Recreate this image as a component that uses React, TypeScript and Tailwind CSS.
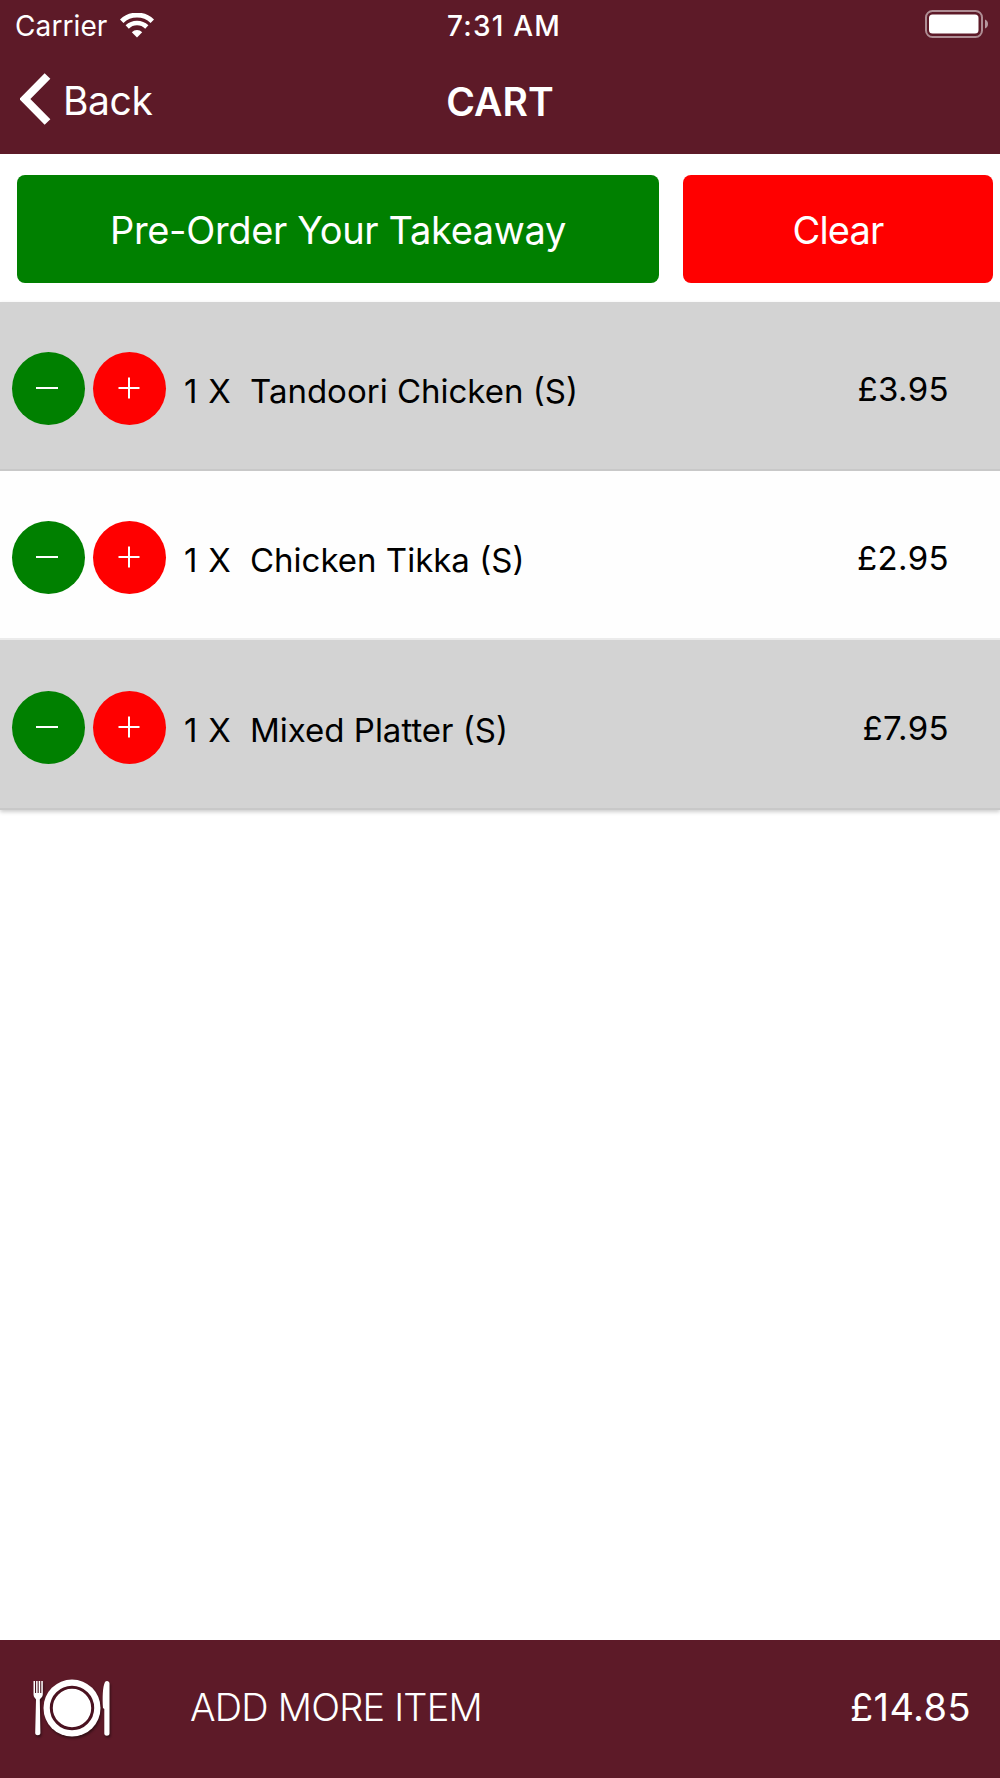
import React, {useState} from "react";

interface CartItem {
    id: number
    name: string
    price: number
    quantity: number
}

const ITEMS: CartItem[] = [
    {id: 1, name: "Tandoori Chicken (S)", price: 3.95, quantity: 1},
    {id: 2, name: "Chicken Tikka (S)", price: 2.95, quantity: 1},
    {id: 3, name: "Mixed Platter (S)", price: 7.95, quantity: 1},
];

const formatPrice = (value: number) => `£${value.toFixed(2)}`;

const WifiIcon = () => {
    return <svg width="34" height="25" viewBox="0 0 34 25" fill="none" stroke="#fff" className="-ml-px">
        <path d="M1.7 8.3a22 22 0 0 1 30.6 0" strokeWidth="5" />
        <path d="M7.2 14a14 14 0 0 1 19.6 0" strokeWidth="4.6" />
        <path d="M17 24.5l-5.2-5.3a7.4 7.4 0 0 1 10.4 0z" fill="#fff" stroke="none" />
    </svg>
}

const BatteryIcon = () => {
    return <svg width="64" height="28" viewBox="0 0 64 28" className="mb-[3px]">
        <rect x="1" y="1" width="56" height="26" rx="6.5" fill="none" stroke="#fff" strokeOpacity="0.5" strokeWidth="2" />
        <rect x="4" y="4.5" width="49.5" height="19" rx="3.5" fill="#fff" />
        <path d="M60 9.5c4 1.2 4 7.8 0 9z" fill="#fff" fillOpacity="0.55" />
    </svg>
}

const PlateIcon = () => {
    return <svg width="80" height="60" viewBox="0 0 80 60" className="mt-[3px] drop-shadow-[1px_2px_1px_rgba(0,0,0,0.45)]">
        <path d="M2.5 2h1.5v12h1.1v-12h1.5v12h1.1v-12h1.5v12h1.1v-12h1.5v13.5c0 2.5-2.4 3.5-3 5l.6 33.5c0 3-5.200 3-5.200 0l.8-33.5c-.6-1.5-2.5-2.5-2.5-5z" fill="#fff" />
        <circle cx="41" cy="29" r="28.5" fill="#fff" />
        <circle cx="41" cy="29" r="20.7" fill="none" stroke="#4a1220" strokeWidth="3" />
        <path d="M72 29c-.6-10-.5-21 2-26 1.500-2 4.500-1 4.500 1.500v50c0 3-5.200 3-5.200 0v-24.500z" fill="#fff" />
    </svg>
}

interface RoundButtonProps {
    label: string
    className: string
    onClick: () => void
    plus?: boolean
}

const RoundButton = ({label, className, onClick, plus}: RoundButtonProps) => {
    return <button aria-label={label} onClick={onClick}
                   className={`flex size-[73px] items-center justify-center rounded-full ${className}`}>
        <svg width="22" height="22" viewBox="0 0 22 22" stroke="#fff" strokeWidth="2" className={plus ? "mr-0.5 mb-px" : "mr-[3px] mb-px"}>
            <path d={plus ? "M0.5 11h21M11 0.5v21" : "M0 11h22"} />
        </svg>
    </button>
}

interface CartRowProps {
    item: CartItem
    onChange: (id: number, step: number) => void
}

const CartRow = ({item, onChange}: CartRowProps) => {
    return <li className="flex h-[169px] items-center border-b-2 border-[#c8c8c8] pt-1.5 pr-[51px] pl-3 text-[33px] text-black last:h-[170px] odd:bg-[#d3d3d3] even:border-[#ebebeb] even:bg-[#fefefe]">
        <div className="flex gap-2">
            <RoundButton label="Remove one" className="bg-[#008000]" onClick={() => onChange(item.id, -1)} />
            <RoundButton label="Add one" className="bg-[#ff0000]" plus onClick={() => onChange(item.id, 1)} />
        </div>
        <span className="mt-[7px] ml-[18px] w-[66px] tracking-[0.8px] whitespace-nowrap">{item.quantity} X</span>
        <span className="mt-[7px] grow">{item.name}</span>
        <span className="mt-[3px] tracking-[0.4px]">{formatPrice(item.price)}</span>
    </li>
}

const App = () => {
    const [items, setItems] = useState<CartItem[]>(ITEMS);

    const changeHandle = (id: number, step: number) => {
        setItems(items
            .map((item) => item.id === id ? {...item, quantity: item.quantity + step} : item)
            .filter((item) => item.quantity > 0));
    }

    const total = items.reduce((sum, item) => sum + item.price * item.quantity, 0);

    return <div className="flex h-[1778px] w-[1000px] flex-col bg-white font-['Inter',sans-serif] text-white">
        <header className="h-[154px] bg-[#5d1a28]">
            <div className="grid h-[51px] grid-cols-3 items-center pr-[11px] pl-[15px] text-[28px]">
                <div className="flex items-center gap-3.5">
                    <span className="tracking-[0.1px]">Carrier</span>
                    <WifiIcon />
                </div>
                <span className="pl-1 text-center font-medium tracking-[1.2px]">7:31 AM</span>
                <div className="flex justify-end">
                    <BatteryIcon />
                </div>
            </div>
            <div className="grid h-[101px] grid-cols-3 items-center px-5 text-[39px]">
                <button className="flex items-center gap-3">
                    <svg width="31" height="52" viewBox="0 0 31 52" fill="none" stroke="#fff" strokeWidth="8" className="mb-[5px]">
                        <path d="M27.5 3L4.8 26l22.7 23" />
                    </svg>
                    <span className="tracking-[-0.4px]">Back</span>
                </button>
                <h1 className="pt-px text-center font-semibold">CART</h1>
            </div>
        </header>
        <div className="flex gap-6 pt-[21px] pr-[7px] pb-[19px] pl-[17px] text-[38px] tracking-[-0.35px]">
            <button className="h-[108px] w-[642px] rounded-lg bg-[#008000] pt-[3px]">Pre-Order Your Takeaway</button>
            <button className="h-[108px] grow rounded-lg bg-[#ff0000] pt-[3px] tracking-[-0.8px]" onClick={() => setItems([])}>Clear</button>
        </div>
        <ul className="shadow-[0_2px_4px_rgba(0,0,0,0.2)]">
            {items.map((item) => <CartRow key={item.id} item={item} onChange={changeHandle} />)}
        </ul>
        <footer className="mt-auto flex h-[138px] items-center bg-[#5d1a28] pr-[29px] pb-[3px] pl-[31px] text-[38px]">
            <PlateIcon />
            <span className="ml-[79px] grow font-light tracking-[-0.8px]">ADD MORE ITEM</span>
            <span className="tracking-[0.4px]">{formatPrice(total)}</span>
        </footer>
    </div>
}

export default App;
